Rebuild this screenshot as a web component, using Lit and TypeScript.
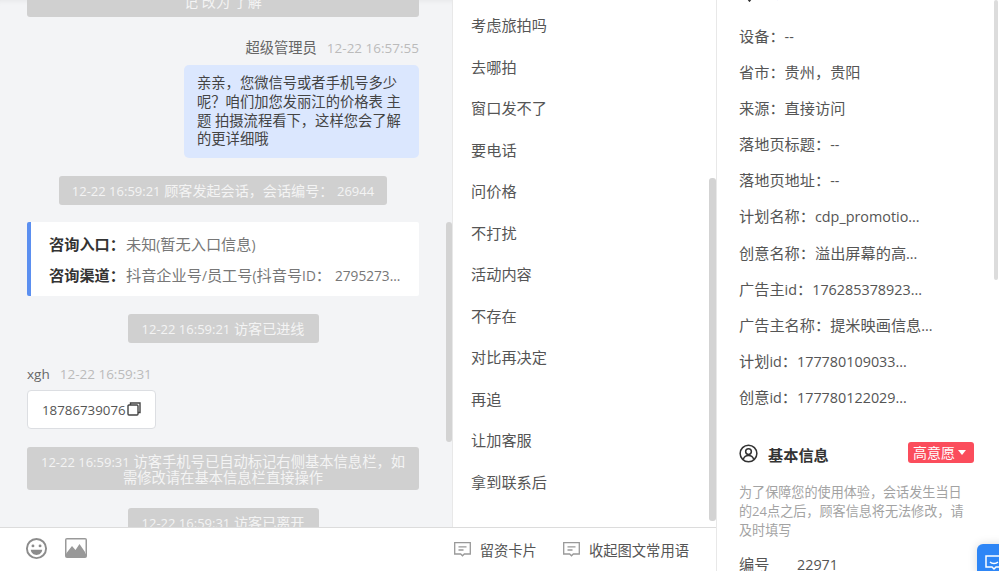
import { LitElement, html, css, svg } from "lit";
import { customElement } from "lit/decorators.js";

const quick = ["考虑旅拍吗","去哪拍","窗口发不了","要电话","问价格","不打扰","活动内容","不存在","对比再决定","再追","让加客服","拿到联系后"];
const visitor = ["设备：--","省市：贵州，贵阳","来源：直接访问","落地页标题：--","落地页地址：--","计划名称：cdp_promotio...","创意名称：溢出屏幕的高...","广告主id：176285378923...","广告主名称：提米映画信息...","计划id：177780109033...","创意id：177780122029..."];

/* Latin runs sit slightly smaller than the CJK around them, as in the reference's font pairing. */
const t = (s: string) =>
  s.split(/([\x21-\x7e][\x20-\x7e]*[\x21-\x7e]|[\x21-\x7e])/).map((p, i) => (i % 2 ? html`<span class="l">${p}</span>` : p));

const noteIcon = svg`<svg class="note" viewBox="0 0 17 15" width="17" height="15" fill="none" stroke="#999" stroke-width="1.300"><path d="M.7.7h15.600v11.300h-6l-1.800 1.800-1.800-1.800h-6z"/><path d="M4.500 4.800h8M4.500 8h5"/></svg>`;

@customElement("app-root")
export class AppRoot extends LitElement {
  static styles = css`
    :host { display: block; width: 999px; height: 571px; overflow: hidden; position: relative; background: #fff;
      font-family: "Open Sans", "Noto Sans CJK SC", sans-serif; font-size: 14.3px; color: #555; }
    .l { font-size: .945em; }
    .page { display: flex; height: 571px; }
    .main { width: 716px; display: flex; flex-direction: column; flex: none; }
    .panes { flex: none; height: 527px; display: flex; overflow: hidden; }
    .chat { width: 452px; flex: none; background: #f3f4f6; position: relative; overflow: hidden; box-shadow: inset 0 6px 6px -6px rgba(0,0,0,.08); }
    .feed { display: flex; flex-direction: column; align-items: center; padding: 0 33px 0 27px; margin-top: -25px; }
    .pill { background: #d0d0d0; color: #f4f4f4; border-radius: 3px; text-align: center; padding: 0 10px; box-sizing: border-box; line-height: 29px; white-space: nowrap; font-size: 14.100px; }
    .pill .l { font-size: 13px; }
    .pill.top { align-self: stretch; height: 42px; padding-top: 12px; }
    .pill.wide { width: 392px; white-space: normal; line-height: 15px; padding: 7px 10px 6px; height: 43px; margin-top: 18px; font-size: 14.300px; }
    .pill.mid { width: 328px; height: 29px; margin-top: 18px; }
    .pill.short { width: 191px; height: 29px; margin-top: 18px; }
    .meta { align-self: flex-end; margin-top: 21px; line-height: 20px; color: #666; display: flex; gap: 10px; }
    .meta.left { align-self: flex-start; margin-top: 21px; }
    .time { color: #bbb; }
    .bubble { align-self: flex-end; width: 235px; height: 93px; box-sizing: border-box; margin-top: 7px; background: #dbe7fe; color: #444; border-radius: 5px; padding: 9px 13px 0; line-height: 18.750px; }
    .info { align-self: stretch; margin-top: 17px; background: #fff; border-left: 4px solid #5b8ff0; border-radius: 2px; padding: 7px 10px 6px 18px; height: 74px; box-sizing: border-box; line-height: 30px; white-space: nowrap; color: #777; font-size: 15.200px; }
    .info .l { font-size: .9em; }
    .info b { color: #333; font-weight: 700; margin-right: 1px; }
    .phone { align-self: flex-start; margin-top: 6px; display: flex; align-items: center; gap: 1px; width: 129px; height: 39px; box-sizing: border-box; padding-left: 14px; background: #fff; border: 1px solid #dcdee2; border-radius: 4px; color: #555; font-size: 13.300px; }
    .phone svg { flex: none; margin-top: -1px; }
    .bar { position: absolute; background: #d3d3d3; border-radius: 3px; }
    .chat .bar { left: 446px; top: 222px; width: 6px; height: 220px; }
    .quick { width: 264px; flex: none; background: #fff; border-left: 1px solid #e8e8e8; box-sizing: border-box; position: relative; overflow: hidden; padding: 5px 0 0 18px; font-size: 15.200px; }
    .quick div.q { height: 41.550px; line-height: 41.550px; color: #555; }
    .quick .bar { left: 256px; top: 178px; width: 7px; height: 343px; }
    .foot { flex: none; height: 44px; border-top: 1px solid #dcdcdc; display: flex; align-items: center; background: #fff; padding: 0 27px 0 25px; }
    .foot .tools { display: flex; gap: 17px; align-items: center; margin-top: -4px; }
    .foot .acts { margin-left: auto; display: flex; gap: 26px; margin-top: -1px; }
    .act { display: flex; align-items: center; gap: 9px; color: #555; }
    .side { flex: 1; border-left: 1px solid #e8e8e8; position: relative; overflow: hidden; padding: 0 0 0 22px; box-sizing: border-box; font-size: 15.200px; }
    .vtitle { margin-top: -35px; height: 52.500px; display: flex; align-items: center; gap: 15px; font-weight: 700; color: #333; padding-left: 4px; }
    .vtitle svg { margin-top: 7px; }
    .vrow { height: 36.200px; line-height: 36.200px; white-space: nowrap; color: #555; }
    .hd { margin-top: 26px; display: flex; align-items: center; height: 24px; padding-right: 25px; }
    .hd b { margin-left: 10px; color: #333; font-weight: 700; }
    .tag { margin-left: auto; margin-top: -2px; background: #fb4d5c; color: #fff; border-radius: 3px; height: 21px; line-height: 21px; width: 66px; box-sizing: border-box; padding-left: 5px; display: flex; align-items: center; gap: 3px; font-size: 14px; }
    .tag i { width: 0; height: 0; border: 4px solid transparent; border-top: 5px solid #fff; border-bottom: 0; }
    .tip { margin-top: 17px; width: 232px; font-size: 13.100px; line-height: 19px; color: #a3a3a3; }
    .tip .l { font-size: 1em; }
    .code { margin-top: 14px; display: flex; gap: 27.600px; line-height: 20px; color: #555; }
    .side .bar { left: 277px; top: 0; width: 4px; height: 280px; background: #dcdcdc; }
    .fab { position: absolute; left: 977px; top: 544px; width: 30px; height: 30px; background: #2e86f6; border-radius: 6px 0 0 0; box-shadow: 0 0 10px rgba(0,0,0,.15); display: flex; padding: 11px 0 0 8px; box-sizing: border-box; }
  `;

  render() {
    return html`
      <div class="page">
        <div class="main">
          <div class="panes">
            <section class="chat">
              <div class="feed">
                <div class="pill top">记 改为 了解</div>
                <div class="meta"><span>超级管理员</span><span class="time">${t("12-22 16:57:55")}</span></div>
                <div class="bubble">亲亲，您微信号或者手机号多少呢？咱们加您发丽江的价格表 主题 拍摄流程看下，这样您会了解的更详细哦</div>
                <div class="pill mid">${t("12-22 16:59:21 顾客发起会话，会话编号： 26944")}</div>
                <div class="info">
                  <div><b>咨询入口：</b>${t("未知(暂无入口信息)")}</div>
                  <div><b>咨询渠道：</b>${t("抖音企业号/员工号(抖音号ID： 2795273...")}</div>
                </div>
                <div class="pill short">${t("12-22 16:59:21 访客已进线")}</div>
                <div class="meta left"><span>${t("xgh")}</span><span class="time">${t("12-22 16:59:31")}</span></div>
                <div class="phone">18786739076<svg viewBox="0 0 14 14" width="14" height="14" fill="none" stroke="#444" stroke-width="1.400"><path d="M3.500 3V1h9.500v9.500h-2"/><rect x="1" y="3" width="10" height="10" rx="1"/></svg></div>
                <div class="pill wide">${t("12-22 16:59:31 访客手机号已自动标记右侧基本信息栏，如需修改请在基本信息栏直接操作")}</div>
                <div class="pill short">${t("12-22 16:59:31 访客已离开")}</div>
              </div>
              <div class="bar"></div>
            </section>
            <section class="quick">
              ${quick.map((q) => html`<div class="q">${q}</div>`)}
              <div class="bar"></div>
            </section>
          </div>
          <div class="foot">
            <div class="tools">
              <svg viewBox="0 0 24 24" width="23" height="23" fill="none" stroke="#8c8c8c" stroke-width="2"><circle cx="12" cy="12" r="10"/><circle cx="8.300" cy="9.300" r="1.500" fill="#8c8c8c" stroke="none"/><circle cx="15.700" cy="9.300" r="1.500" fill="#8c8c8c" stroke="none"/><path d="M6 13.300h12c-.4 3.400-3 5.400-6 5.400s-5.600-2-6-5.400z" fill="#8c8c8c" stroke="none"/></svg>
              <svg viewBox="0 0 22 20" width="22" height="20"><rect width="22" height="20" rx="2" fill="#999"/><rect x="1.500" y="1.500" width="19" height="14" fill="#fff"/><path d="M1.500 15l5.500-7 3.500 4 4-6 5.500 8v4h-18.500z" fill="#999"/></svg>
            </div>
            <div class="acts">
              <div class="act">${noteIcon}留资卡片</div>
              <div class="act">${noteIcon}收起图文常用语</div>
            </div>
          </div>
        </div>
        <aside class="side">
          <div class="vtitle"><svg viewBox="0 0 14 16" width="13" height="15" fill="none" stroke="#333" stroke-width="2.200"><path d="M7 14.500L2.200 8.500a6 6 0 1 1 9.600 0z"/></svg>访客信息</div>
          <div>${visitor.map((v) => html`<div class="vrow">${t(v)}</div>`)}</div>
          <div class="hd">
            <svg viewBox="0 0 20 20" width="19" height="19" fill="none" stroke="#333" stroke-width="1.600"><circle cx="10" cy="10" r="8.800"/><circle cx="10" cy="8" r="3"/><path d="M4.500 16c1-3 3-4 5.500-4s4.500 1 5.500 4"/></svg>
            <b>基本信息</b>
            <span class="tag">高意愿<i></i></span>
          </div>
          <div class="tip">${t("为了保障您的使用体验，会话发生当日的24点之后，顾客信息将无法修改，请及时填写")}</div>
          <div class="code"><span>编号</span><span>${t("22971")}</span></div>
          <div class="bar"></div>
        </aside>
      </div>
      <div class="fab"><svg viewBox="0 0 18 16" width="18" height="16" fill="none" stroke="#fff" stroke-width="1.500"><path d="M1 1h16v11h-6l-2 2-2-2H1z"/><path d="M5 7c2 2 6 2 8 0"/></svg></div>
    `;
  }
}
